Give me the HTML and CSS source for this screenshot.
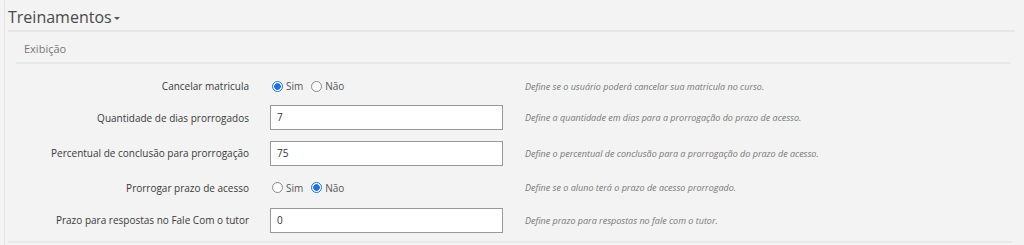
FILE: index.html
```html
<!DOCTYPE html>
<html>
<head>
	<meta charset="utf-8">
	<title>Treinamentos</title>
	<link rel="stylesheet" href="styles.css">
</head>
<body>
<div class="page">
	<h2 class="title">Treinamentos<span class="caret"></span></h2>
	<div class="section">
		<h3 class="legend">Exibição</h3>
		<div class="form">
			<div class="row r1">
				<label class="lbl">Cancelar matricula</label>
				<div class="ctrl radios">
					<span class="opt"><i class="radio on"></i>Sim</span>
					<span class="opt"><i class="radio"></i>Não</span>
				</div>
				<div class="help">Define se o usuário poderá cancelar sua matricula no curso.</div>
			</div>
			<div class="row r2">
				<label class="lbl">Quantidade de dias prorrogados</label>
				<div class="ctrl"><div class="input">7</div></div>
				<div class="help">Define a quantidade em dias para a prorrogação do prazo de acesso.</div>
			</div>
			<div class="row r3">
				<label class="lbl">Percentual de conclusão para prorrogação</label>
				<div class="ctrl"><div class="input">75</div></div>
				<div class="help">Define o percentual de conclusão para a prorrogação do prazo de acesso.</div>
			</div>
			<div class="row r4">
				<label class="lbl">Prorrogar prazo de acesso</label>
				<div class="ctrl radios">
					<span class="opt"><i class="radio"></i>Sim</span>
					<span class="opt"><i class="radio on"></i>Não</span>
				</div>
				<div class="help">Define se o aluno terá o prazo de acesso prorrogado.</div>
			</div>
			<div class="row r5">
				<label class="lbl">Prazo para respostas no Fale Com o tutor</label>
				<div class="ctrl"><div class="input">0</div></div>
				<div class="help">Define prazo para respostas no fale com o tutor.</div>
			</div>
		</div>
	</div>
</div>
</body>
</html>
```
FILE: styles.css
```css
*{
	margin:0;
	padding:0;
	box-sizing:border-box;
}
body{
	background:#f3f3f3;
	font-family:"Open Sans","Liberation Sans",sans-serif;
	color:#333;
	width:1024px;
	height:245px;
	overflow:hidden;
}
.page{
	margin-left:4px;
	border-left:1px solid #e4e4e4;
	height:245px;
	padding:0 12px 0 3px;
}
.title{
	font-size:16px;
	font-weight:normal;
	color:#4a4a4a;
	height:32px;
	line-height:34px;
	border-bottom:2px solid #e6e6e6;
	margin-right:-3px;
}
.caret{
	display:inline-block;
	width:0;
	height:0;
	border-left:3px solid transparent;
	border-right:3px solid transparent;
	border-top:3px solid #555;
	margin-left:2px;
	vertical-align:middle;
}
.section{
	padding:0 0 0 8px;
}
.legend{
	font-size:11px;
	font-weight:normal;
	color:#777;
	height:32px;
	line-height:34px;
	padding-left:8px;
	border-bottom:2px solid #e8e8e8;
	margin-right:2px;
	margin-bottom:8px;
}
.form{
	border-bottom:2px solid #e8e8e8;
	margin-left:-8px;
	padding-bottom:5px;
}
.row{
	display:grid;
	grid-template-columns:241px 233px 1fr;
	column-gap:21px;
	align-items:center;
}
.r1{ height:28px; }
.r2{ height:35px; }
.r3{ height:36px; }
.r4{ height:33px; }
.r5{ height:32px; }
.lbl{
	text-align:right;
	font-size:10px;
	color:#3a3a3a;
}
.help{
	font-size:9px;
	font-style:italic;
	color:#777;
	padding-left:1px;
}
.radios{
	display:flex;
	gap:8px;
	font-size:10px;
	color:#555;
	padding-left:2px;
}
.opt{
	display:flex;
	align-items:center;
	gap:3px;
}
.radio{
	display:inline-block;
	width:11px;
	height:11px;
	border:1px solid #888;
	border-radius:50%;
	background:#fff;
}
.radio.on{
	border-color:#1a73e8;
	background:radial-gradient(circle,#1a73e8 0,#1a73e8 3px,#fff 3.6px);
}
.input{
	height:25px;
	border:1px solid #999;
	background:#fff;
	font-size:10px;
	line-height:23px;
	padding-left:6px;
	color:#333;
}
```
